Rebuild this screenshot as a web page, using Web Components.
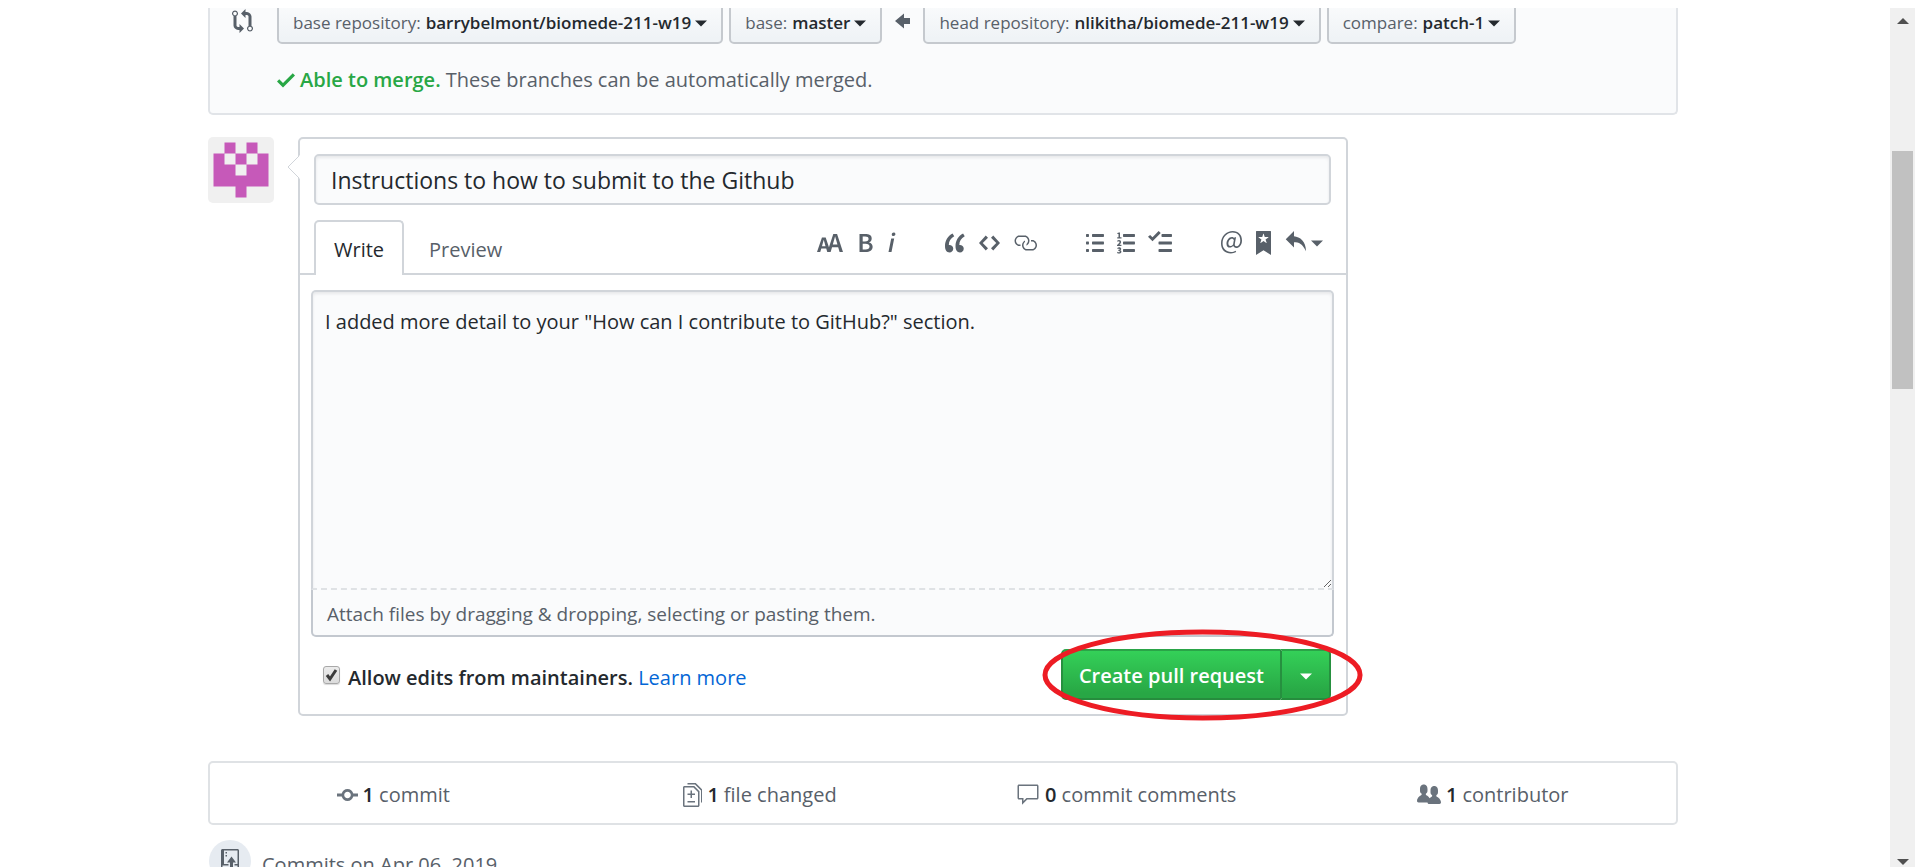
<!DOCTYPE html>
<html lang="en">
<head>
<meta charset="utf-8">
<title>Open a pull request</title>
<style>
  body {
    margin: 0;
    background: #fff;
    color: #24292e;
    font: 20px/30px "Open Sans", "Noto Sans", sans-serif;
    --muted: #586069;
    --line: #d1d5da;
    --line-soft: #dfe2e5;
    --field: #fafbfc;
    --link: #0366d6;
    --green: #28a745;
  }
</style>
</head>
<body>
<page-window>
  <merge-panel>
    <branch-picker slot="base" label="base repository:">barrybelmont/biomede-211-w19</branch-picker>
    <branch-picker slot="base" label="base:">master</branch-picker>
    <branch-picker slot="head" label="head repository:">nlikitha/biomede-211-w19</branch-picker>
    <branch-picker slot="head" label="compare:">patch-1</branch-picker>
  </merge-panel>
  <timeline-comment>
    <user-avatar slot="avatar"></user-avatar>
    <pull-form></pull-form>
  </timeline-comment>
  <stats-bar>
    <stat-item icon="commit" count="1">commit</stat-item>
    <stat-item icon="diff" count="1">file changed</stat-item>
    <stat-item icon="comment" count="0">commit comments</stat-item>
    <stat-item icon="people" count="1">contributor</stat-item>
  </stats-bar>
  <commit-group>Commits on Apr 06, 2019</commit-group>
</page-window>

<script>
const define = (name, html, setup) => {
  const template = document.createElement('template');
  template.innerHTML = html;
  customElements.define(name, class extends HTMLElement {
    connectedCallback() {
      if (this.shadowRoot) return;
      this.attachShadow({ mode: 'open' }).append(template.content.cloneNode(true));
      if (setup) setup(this, this.shadowRoot);
    }
  });
};

// Icon set: [width in a 16-unit tall grid, path]
const ICONS = {
  compare: [14, 'M5 12H4c-.27-.02-.48-.11-.69-.31-.21-.2-.3-.42-.31-.69V4.72A1.993 1.993 0 0 0 2 1a1.993 1.993 0 0 0-1 3.72V11c.03.78.34 1.47.94 2.06.6.59 1.28.91 2.06.94h1v2l3-3-3-3v2zM2 1.8c.66 0 1.2.55 1.2 1.2 0 .65-.55 1.2-1.2 1.2C1.35 4.2.8 3.65.8 3c0-.65.55-1.2 1.2-1.2zm11 9.48V5c-.03-.78-.34-1.47-.94-2.06-.6-.59-1.28-.91-2.06-.94H9V0L6 3l3 3V4h1c.27.02.48.11.69.31.21.2.3.42.31.69v6.28A1.993 1.993 0 0 0 12 15a1.993 1.993 0 0 0 1-3.72zm-1 2.92c-.66 0-1.2-.55-1.2-1.2 0-.65.55-1.2 1.2-1.2.65 0 1.2.55 1.2 1.2 0 .65-.55 1.2-1.2 1.2z'],
  left: [10, 'M6 3L0 8l6 5v-3h4V6H6V3z'],
  check: [12, 'M12 5l-8 8-4-4 1.5-1.5L4 10l6.5-6.5L12 5z'],
  size: [18, 'M13.62 9.08L12.1 3.66h-.06l-1.5 5.42h3.08zM5.7 10.13S4.68 6.52 4.53 6.02h-.08l-1.13 4.11H5.7zM17.31 14h-2.25l-.95-3.25h-4.07L9.09 14H6.84l-.69-2.33H2.87L2.17 14H0l3.3-9.59h2.5l2.17 6.34L10.86 2h2.52l3.94 12h-.01z'],
  bold: [10, 'M1 2h3.83c2.48 0 4.3.75 4.3 2.95 0 1.14-.63 2.23-1.67 2.61v.06c1.33.3 2.3 1.23 2.3 2.86 0 2.39-1.97 3.52-4.61 3.52H1V2zm3.66 4.95c1.67 0 2.38-.66 2.38-1.69 0-1.17-.78-1.61-2.34-1.61H3.13v3.3h1.53zm.27 5.39c1.77 0 2.75-.64 2.75-1.98 0-1.27-.95-1.81-2.75-1.81h-1.8v3.8h1.8v-.01z'],
  italic: [6, 'M2.81 5h1.98L3 14H1l1.81-9zm.36-2.7c0-.7.58-1.3 1.33-1.3.56 0 1.13.38 1.13 1.03 0 .75-.59 1.3-1.33 1.3-.58 0-1.13-.38-1.13-1.03z'],
  quote: [14, 'M6.16 3.5C3.73 5.06 2.55 6.67 2.55 9.36c.16-.05.3-.05.44-.05 1.27 0 2.5.86 2.5 2.41 0 1.61-1.03 2.61-2.5 2.61-1.9 0-2.99-1.52-2.99-4.25 0-3.8 1.75-6.53 5.02-8.42L6.16 3.5zm7 0c-2.43 1.56-3.61 3.17-3.61 5.86.16-.05.3-.05.44-.05 1.27 0 2.5.86 2.5 2.41 0 1.61-1.03 2.61-2.5 2.61-1.89 0-2.98-1.52-2.98-4.25 0-3.8 1.75-6.53 5.02-8.42l1.14 1.84h-.01z'],
  code: [14, 'M9.5 3L8 4.5 11.5 8 8 11.5 9.5 13 14 8 9.5 3zm-5 0L0 8l4.5 5L6 11.5 2.5 8 6 4.5 4.5 3z'],
  link: [16, 'M4 9h1v1H4c-1.5 0-3-1.69-3-3.5S2.55 3 4 3h4c1.45 0 3 1.69 3 3.5 0 1.41-.91 2.72-2 3.25V8.59c.58-.45 1-1.27 1-2.09C10 5.22 8.98 4 8 4H4c-.98 0-2 1.22-2 2.5S3 9 4 9zm9-3h-1v1h1c1 0 2 1.22 2 2.5S13.98 12 13 12H9c-.98 0-2-1.22-2-2.5 0-.83.42-1.64 1-2.09V6.25c-1.09.53-2 1.84-2 3.25C6 11.31 7.55 13 9 13h4c1.45 0 3-1.69 3-3.5S14.5 6 13 6z'],
  ul: [12, 'M2 13c0 .59 0 1-.59 1H.59C0 14 0 13.59 0 13c0-.59 0-1 .59-1h.81c.59 0 .59.41.59 1H2zm2.59-9h6.81c.59 0 .59-.41.59-1 0-.59 0-1-.59-1H4.59C4 2 4 2.41 4 3c0 .59 0 1 .59 1zM1.41 7H.59C0 7 0 7.41 0 8c0 .59 0 1 .59 1h.81c.59 0 .59-.41.59-1 0-.59 0-1-.59-1h.01zm0-5H.59C0 2 0 2.41 0 3c0 .59 0 1 .59 1h.81c.59 0 .59-.41.59-1 0-.59 0-1-.59-1h.01zm10 5H4.59C4 7 4 7.41 4 8c0 .59 0 1 .59 1h6.81c.59 0 .59-.41.59-1 0-.59 0-1-.59-1h.01zm0 5H4.59C4 12 4 12.41 4 13c0 .59 0 1 .59 1h6.81c.59 0 .59-.41.59-1 0-.59 0-1-.59-1h.01z'],
  ol: [12, 'M12 13c0 .59 0 1-.59 1H4.59C4 14 4 13.59 4 13c0-.59 0-1 .59-1h6.81c.59 0 .59.41.59 1H12zM4.59 4h6.81c.59 0 .59-.41.59-1 0-.59 0-1-.59-1H4.59C4 2 4 2.41 4 3c0 .59 0 1 .59 1zm6.81 3H4.59C4 7 4 7.41 4 8c0 .59 0 1 .59 1h6.81c.59 0 .59-.41.59-1 0-.59 0-1-.59-1zM2 1h-.72c-.3.19-.58.25-1.03.34V2H1v2.14H.16V5H3v-.86H2V1zm.25 8.13c-.17 0-.45.03-.66.06.53-.56 1.14-1.25 1.14-1.89C2.72 6.52 2.17 6 1.37 6c-.59 0-.97.2-1.38.64l.58.58c.19-.19.38-.38.64-.38.28 0 .48.16.48.52 0 .53-.77 1.2-1.7 2.06V10h3l-.09-.88h-.66l.01.01zm-.08 3.78v-.03c.44-.19.64-.47.64-.86 0-.7-.56-1.11-1.44-1.11-.48 0-.89.19-1.28.52l.55.64c.25-.2.44-.31.69-.31.27 0 .42.13.42.36 0 .27-.2.44-.86.44v.75c.83 0 .98.17.98.47 0 .25-.23.38-.58.38-.28 0-.56-.14-.81-.38l-.48.66c.3.36.77.56 1.41.56.83 0 1.53-.41 1.53-1.16 0-.5-.31-.81-.77-.94v.01z'],
  tasks: [16, 'M15.41 9H7.59C7 9 7 8.59 7 8c0-.59 0-1 .59-1h7.81c.59 0 .59.41.59 1 0 .59 0 1-.59 1h.01zM9.59 4C9 4 9 3.59 9 3c0-.59 0-1 .59-1h5.81c.59 0 .59.41.59 1 0 .59 0 1-.59 1H9.59zM0 3.91l1.41-1.3L3 4.2 7.09 0 8.5 1.41 3 6.91l-3-3zM7.59 12h7.81c.59 0 .59.41.59 1 0 .59 0 1-.59 1H7.59C7 14 7 13.59 7 13c0-.59 0-1 .59-1z'],
  mention: [14, 'M6.58 15c1.25 0 2.52-.31 3.56-.94l-.42-.94c-.84.52-1.89.83-3.03.83-3.23 0-5.64-2.08-5.64-5.72 0-4.37 3.23-7.18 6.58-7.18 3.45 0 5.22 2.19 5.22 5.2 0 2.39-1.34 3.86-2.5 3.86-1.05 0-1.36-.73-1.05-2.19l.73-3.75H8.98l-.11.72c-.41-.63-.94-.83-1.56-.83-2.19 0-3.66 2.39-3.66 4.38 0 1.67.94 2.61 2.3 2.61.84 0 1.67-.53 2.3-1.25.11.94.94 1.45 1.98 1.45 1.67 0 3.77-1.67 3.77-5C14 2.61 11.59 0 7.83 0 3.66 0 0 3.33 0 8.33 0 12.71 2.92 15 6.58 15zm-.31-5c-.73 0-1.36-.52-1.36-1.67 0-1.45.94-3.22 2.41-3.22.52 0 .84.2 1.25.83l-.52 3.02C7.42 9.69 6.79 10 6.27 10z'],
  saved: [10, 'M9.6 0H.4C.1 0 0 .1 0 .4V16l5-3.09L10 16V.4c0-.3-.1-.4-.4-.4zM8.22 4.25L6.36 5.61l.72 2.16c.06.22-.02.28-.2.17L5 6.6 3.12 7.94c-.19.11-.25.05-.2-.17l.72-2.16-1.86-1.36c-.17-.16-.14-.23.09-.23l2.3-.03.7-2.16h.25l.7 2.16 2.3.03c.23 0 .27.08.09.23h.11z'],
  reply: [14, 'M6 3.5c3.92.44 8 3.125 8 10-2.312-5.062-4.75-6-8-6V11L.5 5.5 6 0v3.5z'],
  caret: [8, 'M0 6.4h8L4 10.4z'],
  commit: [14, 'M10.86 7c-.45-1.72-2-3-3.86-3-1.86 0-3.41 1.28-3.86 3H0v2h3.14c.45 1.72 2 3 3.86 3 1.86 0 3.41-1.28 3.86-3H14V7h-3.14zM7 10.2c-1.22 0-2.2-.98-2.2-2.2 0-1.22.98-2.2 2.2-2.2 1.22 0 2.2.98 2.2 2.2 0 1.22-.98 2.2-2.2 2.2z'],
  diff: [13, 'M6 7h2v1H6v2H5V8H3V7h2V5h1v2zm-3 6h5v-1H3v1zM7.5 2L11 5.5V15c0 .55-.45 1-1 1H1c-.55 0-1-.45-1-1V3c0-.55.45-1 1-1h6.5zM10 6L7 3H1v12h9V6zM8.5 0H3v1h5l4 4v8h1V4.5L8.5 0z'],
  comment: [16, 'M14 1H2c-.55 0-1 .45-1 1v8c0 .55.45 1 1 1h2v3.5L7.5 11H14c.55 0 1-.45 1-1V2c0-.55-.45-1-1-1zm0 9H7l-2 2v-2H2V2h12v8z'],
  people: [16, 'M16 12.999c0 .439-.45 1-1 1H7.995c-.539 0-.994-.447-.995-.999H1c-.54 0-1-.561-1-1 0-2.634 3-4 3-4s.229-.409 0-1c-.841-.621-1.058-.59-1-3 .058-2.419 1.367-3 2.5-3s2.442.58 2.5 3c.058 2.41-.159 2.379-1 3-.229.59 0 1 0 1s1.549.711 2.42 2.088C9.196 9.369 10 8.999 10 8.999s.229-.409 0-1c-.841-.62-1.058-.59-1-3 .058-2.419 1.367-3 2.5-3s2.437.581 2.495 3c.059 2.41-.158 2.38-1 3-.229.59 0 1 0 1s3.005 1.366 3.005 4z'],
  push: [12, 'M4 3H3V2h1v1zM3 5h1V4H3v1zm4 0L4 9h2v7h2V9h2L7 5zm4-5H1C.45 0 0 .45 0 1v12c0 .55.45 1 1 1h4v-1H1v-2h4v-1H2V1h9.02L11 10H9v1h2v2H9v1h2c.55 0 1-.45 1-1V1c0-.55-.45-1-1-1z']
};

define('gh-icon', `<style>
  :host { display: inline-flex; flex: none; }
  svg { display: block; height: 24px; fill: currentColor; }
</style>`, (el, root) => {
  const [w, d] = ICONS[el.getAttribute('name')];
  root.innerHTML += `<svg viewBox="0 0 ${w} 16" width="${w * 1.5}" height="24" aria-hidden="true"><path fill-rule="evenodd" d="${d}"/></svg>`;
});

define('page-window', `<style>
  :host { display: grid; grid-template-columns: minmax(0, 1fr) 25px; height: calc(100vh - 8px); margin-top: 8px; overflow: hidden; }
  main { min-width: 0; padding: 0 4px 0 0; overflow: hidden; }
  .column { max-width: 1470px; margin: 0 auto; }
</style>
<main><div class="column"><slot></slot></div></main>
<scroll-rail></scroll-rail>`);

define('scroll-rail', `<style>
  :host { display: grid; grid-template-rows: 18px 125px 238px 1fr 8px; justify-items: center; background: #f0f0f0; }
  .thumb { grid-row: 3; width: 21px; background: #c1c1c1; }
  svg { display: block; fill: #505050; }
  .up { grid-row: 1; align-self: end; }
  .down { grid-row: 5; }
</style>
<svg class="up" width="12" height="8"><path d="M0 6L6 0l6 6z"/></svg>
<div class="thumb"></div>
<svg class="down" width="12" height="8"><path d="M0 0h12L6 6z"/></svg>`);

define('branch-picker', `<style>
  :host { display: block; }
  button {
    display: flex; align-items: center; box-sizing: border-box; height: 42px; padding: 0 14px;
    border: 2px solid #c5c9ce; border-radius: 5px; background: linear-gradient(#fafbfc, #eff3f6 90%);
    color: #24292e; font: 600 17px/24px "Open Sans", "Noto Sans", sans-serif; white-space: nowrap;
  }
  span { margin-right: 5px; color: var(--muted); font-weight: 400; }
  gh-icon { margin-left: 4px; }
</style>
<button type="button"><span></span><slot></slot><gh-icon name="caret"></gh-icon></button>`,
(el, root) => { root.querySelector('span').textContent = el.getAttribute('label'); });

define('merge-panel', `<style>
  :host { display: block; padding: 0 22px 18px; border: 2px solid #e1e4e8; border-top: 0; border-radius: 0 0 5px 5px; background: var(--field); }
  .row { display: flex; align-items: center; gap: 6px; margin-top: -6px; }
  gh-icon { color: var(--muted); padding-bottom: 4px; }
  .compare { margin-right: 18px; }
  .arrow { padding-left: 7px; padding-right: 7px; }
  p { display: flex; align-items: center; gap: 5px; margin: 21px 0 0 45px; color: var(--muted); }
  p gh-icon, strong { color: var(--green); }
  p gh-icon { padding: 0; }
  strong { font-weight: 600; }
</style>
<div class="row">
  <gh-icon class="compare" name="compare"></gh-icon>
  <slot name="base"></slot>
  <gh-icon class="arrow" name="left"></gh-icon>
  <slot name="head"></slot>
</div>
<p><gh-icon name="check"></gh-icon><span><strong>Able to merge.</strong> These branches can be automatically merged.</span></p>`);

define('user-avatar', `<style>
  :host { display: block; }
  svg { display: block; border-radius: 5px; background: #f0f0f0; fill: #c659b9; }
</style>
<svg width="66" height="66" viewBox="0 0 12 12" role="img" aria-label="Author avatar">
  <path d="M3 1h2v2h2V1h2v2h2v6H7v2H5V9H1V3h2z"/>
  <path fill="#f0f0f0" d="M3 3h2v2H3zM7 3h2v2H7zM5 5h2v2H5z"/>
</svg>`);

define('timeline-comment', `<style>
  :host { display: flex; gap: 24px; margin: 22px 0 45px; }
  .body { flex: 1; min-width: 0; max-width: 1050px; }
</style>
<slot name="avatar"></slot>
<div class="body"><slot></slot></div>`);

define('editor-tools', `<style>
  :host { display: flex; gap: 49px; color: var(--muted); }
  div { display: flex; gap: 13px; }
  div:first-of-type, div:last-of-type { gap: 14px; }
  button { display: flex; gap: 5px; padding: 0; border: 0; background: none; color: inherit; }
</style>
<div>
  <button type="button" aria-label="Add header text"><gh-icon name="size"></gh-icon></button>
  <button type="button" aria-label="Add bold text"><gh-icon name="bold"></gh-icon></button>
  <button type="button" aria-label="Add italic text"><gh-icon name="italic"></gh-icon></button>
</div>
<div>
  <button type="button" aria-label="Insert a quote"><gh-icon name="quote"></gh-icon></button>
  <button type="button" aria-label="Insert code"><gh-icon name="code"></gh-icon></button>
  <button type="button" aria-label="Add a link"><gh-icon name="link"></gh-icon></button>
</div>
<div>
  <button type="button" aria-label="Add a bulleted list"><gh-icon name="ul"></gh-icon></button>
  <button type="button" aria-label="Add a numbered list"><gh-icon name="ol"></gh-icon></button>
  <button type="button" aria-label="Add a task list"><gh-icon name="tasks"></gh-icon></button>
</div>
<div>
  <button type="button" aria-label="Mention a user"><gh-icon name="mention"></gh-icon></button>
  <button type="button" aria-label="Reference an issue"><gh-icon name="saved"></gh-icon></button>
  <button type="button" aria-label="Insert a reply"><gh-icon name="reply"></gh-icon><gh-icon name="caret"></gh-icon></button>
</div>`);

define('split-button', `<style>
  :host { position: relative; display: flex; }
  button {
    display: flex; align-items: center; justify-content: center; box-sizing: border-box; height: 51px;
    border: 2px solid; border-color: #2aa448 #26903f #268c3d #26903f;
    background: linear-gradient(#34d058, #28a745 90%); color: #fff;
    font: 600 20px/30px "Open Sans", "Noto Sans", sans-serif;
  }
  .main { padding: 2px 16px 0; border-radius: 5px 0 0 5px; border-right: 0; }
  .menu { width: 51px; padding: 2px 0 0; border-radius: 0 5px 5px 0; }
  .mark { position: absolute; inset: -17px -29px -18px -16px; pointer-events: none; }
  .mark svg { display: block; width: 100%; height: 100%; overflow: visible; }
</style>
<button type="button" class="main"><slot></slot></button>
<button type="button" class="menu" aria-label="Select type of pull request"><gh-icon name="caret"></gh-icon></button>
<div class="mark"><svg><ellipse cx="50%" cy="50%" rx="50%" ry="50%" fill="none" stroke="#ed1c24" stroke-width="5"/></svg></div>`);

define('pull-form', `<style>
  :host { display: block; position: relative; border: 2px solid var(--line); border-radius: 5px; background: #fff; }
  .pointer { position: absolute; left: -13px; top: 16px; display: block; }
  .title { padding: 15px 15px 0 14px; }
  input[type=text], textarea {
    display: block; box-sizing: border-box; width: 100%; margin: 0; background: var(--field); color: inherit;
    border: 2px solid var(--line); border-radius: 5px; box-shadow: inset 0 2px 3px rgba(27, 31, 35, .08);
  }
  input[type=text] { height: 51px; padding: 0 15px; font: 23px/32px "Open Sans", "Noto Sans", sans-serif; }
  .bar { display: flex; justify-content: space-between; margin-top: 15px; padding: 0 23px 0 14px; border-bottom: 2px solid var(--line); }
  .tabs { display: flex; gap: 5px; margin-bottom: -2px; }
  .tabs button {
    box-sizing: border-box; height: 55px; padding: 2px 18px 0; border: 2px solid transparent; border-bottom: 0;
    border-radius: 5px 5px 0 0; background: none; color: var(--muted); font: inherit;
  }
  .tabs button[aria-selected=true] { border-color: var(--line); background: #fff; color: #24292e; }
  editor-tools { margin-top: 11px; align-self: flex-start; }
  .editor { margin: 15px 12px 12px 11px; }
  textarea {
    height: 300px; padding: 14px 12px; font: 20px/32px "Open Sans", "Noto Sans", sans-serif; resize: vertical;
    border-bottom: 2px dashed var(--line-soft); border-radius: 5px 5px 0 0;
  }
  .drop { display: flex; align-items: center; box-sizing: border-box; height: 47px; padding: 2px 14px 0;
    border: 2px solid #c3c8cf; border-top: 0; border-radius: 0 0 5px 5px; background: var(--field); color: var(--muted); font-size: 19px; }
  .actions { display: flex; justify-content: space-between; padding: 0 15px 14px 23px; }
  .allow { display: flex; align-items: flex-start; gap: 8px; margin-top: 14px; font-weight: 600; }
  .allow a { font-weight: 400; color: var(--link); text-decoration: none; }
  input[type=checkbox] {
    appearance: none; flex: none; width: 17px; height: 18px; margin: 3px 0 0; border: 1px solid #a8a8a8; border-radius: 3px;
    background: linear-gradient(#ececec, #dcdcdc); box-shadow: 0 1px 1px rgba(0, 0, 0, .15);
  }
  .tick { display: grid; }
  .tick > * { grid-area: 1 / 1; }
  .tick svg { width: 17px; height: 18px; margin-top: 3px; pointer-events: none; }
</style>
<svg class="pointer" width="13" height="24"><path fill="#fff" d="M13 0L1 12l12 12z"/><path fill="none" stroke="#d1d5da" d="M12 1L1 12"/><path fill="none" stroke="#d1d5da" d="M1 12l11 11"/></svg>
<div class="title"><input type="text" aria-label="Title" value="Instructions to how to submit to the Github"></div>
<div class="bar">
  <div class="tabs" role="tablist">
    <button type="button" role="tab" aria-selected="true">Write</button>
    <button type="button" role="tab" aria-selected="false">Preview</button>
  </div>
  <editor-tools></editor-tools>
</div>
<div class="editor">
  <textarea aria-label="Comment body">I added more detail to your "How can I contribute to GitHub?" section.</textarea>
  <div class="drop">Attach files by dragging &amp; dropping, selecting or pasting them.</div>
</div>
<div class="actions">
  <div class="allow">
    <span class="tick"><input type="checkbox" id="allow" checked><svg viewBox="0 0 17 18"><path d="M4 9l3 4 6-9" fill="none" stroke="#3c3c3c" stroke-width="3"/></svg></span>
    <span><label for="allow">Allow edits from maintainers.</label> <a href="#">Learn more</a></span>
  </div>
  <split-button>Create pull request</split-button>
</div>`);

define('stats-bar', `<style>
  :host { display: grid; grid-template-columns: repeat(4, 1fr); align-items: center; box-sizing: border-box; height: 64px;
    border: 2px solid var(--line-soft); border-radius: 5px; }
</style><slot></slot>`);

define('stat-item', `<style>
  :host { display: block; }
  a { display: flex; align-items: center; justify-content: center; padding-top: 3px; color: var(--muted); text-decoration: none; }
  gh-icon { margin-right: 5px; color: #6a737d; }
  b { margin-right: 5px; color: #24292e; font-weight: 600; }
</style><a href="#"><b></b><slot></slot></a>`,
(el, root) => {
  const icon = document.createElement('gh-icon');
  icon.setAttribute('name', el.getAttribute('icon'));
  root.querySelector('a').prepend(icon);
  root.querySelector('b').textContent = el.getAttribute('count');
});

define('commit-group', `<style>
  :host { display: flex; align-items: center; gap: 11px; margin-top: 15px; color: var(--muted); }
  .badge { display: flex; align-items: center; justify-content: center; width: 42px; height: 42px; margin-left: 1px; border-radius: 50%; background: #e6ebf1; }
  .text { padding-top: 8px; }
</style><span class="badge"><gh-icon name="push"></gh-icon></span><span class="text"><slot></slot></span>`);
</script>
</body>
</html>
